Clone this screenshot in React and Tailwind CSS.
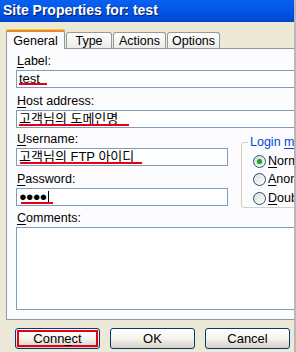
const font = { fontFamily: '"Liberation Sans", "Noto Sans CJK KR", sans-serif' }

function Tab({ label, active, width }) {
  if (active) {
    return (
      <div
        className="relative h-[20px] border border-b-0 border-[#919B9C] bg-[#FCFCFE] rounded-t-[3px] text-[12.5px] leading-[18px] text-black text-center"
        style={{ width }}
      >
        <div className="absolute -left-px -right-px -top-px h-[3px] rounded-t-[3px] bg-[#E68B2C] border-t border-[#FFC83C]" />
        <span className="relative top-[2px]">{label}</span>
      </div>
    )
  }
  return (
    <div
      className="mb-px h-[16px] border border-b-0 border-[#919B9C] bg-gradient-to-b from-white to-[#ECEBE6] rounded-t-[3px] text-[12.5px] leading-[16px] text-black text-center"
      style={{ width }}
    >
      {label}
    </div>
  )
}

function Label({ k, rest, className = '' }) {
  return (
    <div className={`h-[16px] pl-px text-[12.5px] leading-[16px] text-black ${className}`}>
      <span className="underline underline-offset-2">{k}</span>
      {rest}
    </div>
  )
}

function Field({ w, children, className = '' }) {
  return (
    <div
      className={`relative mt-px h-[18px] border border-[#7F9DB9] bg-white pl-[2px] text-[13px] leading-[16px] text-black whitespace-nowrap overflow-hidden ${className}`}
      style={{ width: w }}
    >
      {children}
    </div>
  )
}

function Mark({ left, width, top }) {
  return <div className="absolute h-[2px] bg-[#E60012]" style={{ left, width, top }} />
}

function Radio({ checked, k, rest }) {
  return (
    <div className="flex h-[18.5px] items-center gap-[2px] whitespace-nowrap text-[12.5px] text-black">
      <div className="flex h-[13px] w-[13px] shrink-0 items-center justify-center rounded-full border border-[#1C5180] bg-gradient-to-br from-[#DCDCD7] to-white">
        {checked && <div className="h-[5px] w-[5px] rounded-full bg-[#21A121] shadow-[0_0_2px_#6fd66f]" />}
      </div>
      <span>
        <span className="underline underline-offset-2">{k}</span>
        {rest}
      </span>
    </div>
  )
}

function Button({ children, red }) {
  return (
    <div className="relative flex h-[21px] w-[85px] items-center justify-center rounded-[3px] border border-[#003C74] bg-gradient-to-b from-white via-[#F4F3EE] to-[#D6D0C5] text-[13px] text-black">
      {red && <div className="absolute inset-[1px] border-2 border-[#E60012]" />}
      <span className="relative">{children}</span>
    </div>
  )
}

export default function App() {
  return (
    <div className="h-[352px] w-[296px] overflow-hidden bg-[#ECE9D8] border-r-2 border-[#B8B8B8]" style={font}>
      <div className="h-[22px] bg-gradient-to-b from-[#0A60F0] via-[#0055E6] to-[#0046CC] pl-[3px] text-[14px] font-bold leading-[21px] text-white [text-shadow:1px_1px_#0a1e6e]">
        Site Properties for: test
      </div>

      <div className="relative z-10 mt-[7px] flex h-[20px] items-end gap-px pl-[6px]">
        <Tab label="General" active width={59} />
        <Tab label="Type" width={46} />
        <Tab label="Actions" width={53} />
        <Tab label="Options" width={53} />
      </div>

      <div className="-mt-px ml-[6px] w-[300px] border border-[#919B9C] bg-[#FCFCFE] pl-[9px] pt-[4px] pb-[9px]">
        <Label k="L" rest="abel:" />
        <Field w={290}>
          test
          <Mark left={2} width={28} top={12} />
        </Field>

        <Label k="H" rest="ost address:" className="mt-[5px]" />
        <Field w={290}>
          고객님의 도메인명
          <Mark left={2} width={110} top={13} />
        </Field>

        <div className="mt-[3px] flex items-start gap-[13px]">
          <div className="w-[212px] shrink-0">
            <Label k="U" rest="sername:" />
            <Field w={212}>
              고객님의 FTP 아이디
              <Mark left={3} width={122} top={13} />
            </Field>
            <Label k="P" rest="assword:" className="mt-[5px]" />
            <Field w={212} className="text-[10px] tracking-[-1px]">
              ●●●●<span className="ml-[2px] inline-block h-[13px] w-px bg-black align-middle" />
              <Mark left={4} width={32} top={13} />
            </Field>
          </div>
          <div className="relative mt-[11px] h-[66px] w-[80px] shrink-0 rounded-[3px] border border-[#D0D0BF] pl-[11px] pt-[9px]">
            <div className="absolute -top-[9px] left-[6px] whitespace-nowrap bg-[#FCFCFE] px-[2px] text-[12.5px] leading-[16px] text-[#0046D5]">
              Login <span className="underline underline-offset-2">m</span>ode
            </div>
            <Radio checked k="N" rest="ormal" />
            <Radio k="A" rest="nonymous" />
            <Radio k="D" rest="ouble" />
          </div>
        </div>

        <Label k="C" rest="omments:" className="mt-[2px]" />
        <div className="mt-px h-[83px] w-[290px] border border-[#7F9DB9] bg-white" />
      </div>

      <div className="mt-[8px] flex gap-[10px] pl-[15px]">
        <Button red>
          Conn<span className="underline underline-offset-2">e</span>ct
        </Button>
        <Button>OK</Button>
        <Button>Cancel</Button>
      </div>
    </div>
  )
}
